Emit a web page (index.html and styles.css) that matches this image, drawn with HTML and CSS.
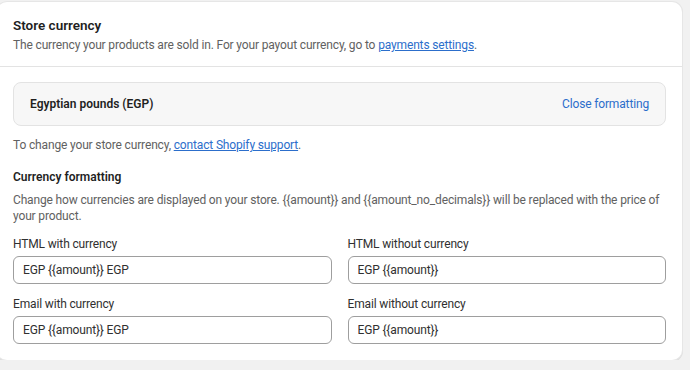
FILE: index.html
```html
<!DOCTYPE html>
<html lang="en">
<head>
    <meta charset="UTF-8">
    <title>Store currency</title>
    <link rel="stylesheet" href="styles.css">
</head>
<body>
    <div class="card">
        <div class="card-header">
            <h2>Store currency</h2>
            <p class="muted">The currency your products are sold in. For your payout currency, go to <a href="#">payments settings</a>.</p>
        </div>

        <div class="card-body">
            <div class="currency-box">
                <span class="currency-name">Egyptian pounds (EGP)</span>
                <a href="#" class="plain-link">Close formatting</a>
            </div>

            <p class="muted change-note">To change your store currency, <a href="#">contact Shopify support</a>.</p>

            <h3>Currency formatting</h3>
            <p class="muted">Change how currencies are displayed on your store. {{amount}} and {{amount_no_decimals}} will be replaced with the price of your product.</p>

            <div class="format-grid">
                <div class="field">
                    <label for="html-with">HTML with currency</label>
                    <input type="text" id="html-with" value="EGP {{amount}} EGP">
                </div>
                <div class="field">
                    <label for="html-without">HTML without currency</label>
                    <input type="text" id="html-without" value="EGP {{amount}}">
                </div>
                <div class="field">
                    <label for="email-with">Email with currency</label>
                    <input type="text" id="email-with" value="EGP {{amount}} EGP">
                </div>
                <div class="field">
                    <label for="email-without">Email without currency</label>
                    <input type="text" id="email-without" value="EGP {{amount}}">
                </div>
            </div>
        </div>
    </div>
</body>
</html>
```

FILE: styles.css
```css
body {
    margin: 0;
    padding: 2px 0 0 0;
    background-color: #f1f1f1;
    font-family: Roboto, "Liberation Sans", sans-serif;
    font-size: 12px;
    letter-spacing: -0.15px;
    color: #303030;
}

.card {
    width: 685px;
    margin-left: -3px;
    box-sizing: border-box;
    background-color: #ffffff;
    border-radius: 10px;
    box-shadow: 0 0 0 1px #e6e6e6, 0 1px 0 1px #dcdcdc;
}

.card-header {
    padding: 13px 16px 13px 16px;
    border-bottom: 1px solid #e3e3e3;
}

h2 {
    margin: 0 0 2px 0;
    font-size: 13.5px;
    font-weight: 600;
    line-height: 20px;
    letter-spacing: 0;
    color: #1f1f1f;
}

h3 {
    margin: 14px 0 5px 0;
    font-size: 12px;
    font-weight: 600;
    line-height: 20px;
    letter-spacing: 0;
    color: #1f1f1f;
}

p {
    margin: 0;
    line-height: 16px;
}

.muted {
    color: #616161;
}

a {
    color: #2c6ecb;
    text-decoration: underline;
}

.plain-link {
    text-decoration: none;
}

.card-body {
    padding: 15px 16px 16px 16px;
}

.currency-box {
    display: flex;
    justify-content: space-between;
    align-items: center;
    height: 44px;
    box-sizing: border-box;
    padding: 0 16px 0 16px;
    background-color: #f7f7f7;
    border: 1px solid #e3e3e3;
    border-radius: 8px;
}

.currency-name {
    font-weight: 600;
    letter-spacing: 0;
    color: #1f1f1f;
}

.change-note {
    margin-top: 11px;
}

.format-grid {
    display: grid;
    grid-template-columns: 1fr 1fr;
    column-gap: 16px;
    row-gap: 12px;
    margin-top: 12px;
}

.field label {
    display: block;
    margin-bottom: 4px;
    line-height: 16px;
    color: #303030;
}

.field input {
    display: block;
    width: 100%;
    height: 28px;
    box-sizing: border-box;
    padding: 0 9px;
    border: 1px solid #9e9e9e;
    border-radius: 6px;
    font-family: inherit;
    font-size: 12px;
    letter-spacing: -0.15px;
    color: #303030;
    background-color: #ffffff;
}
```
